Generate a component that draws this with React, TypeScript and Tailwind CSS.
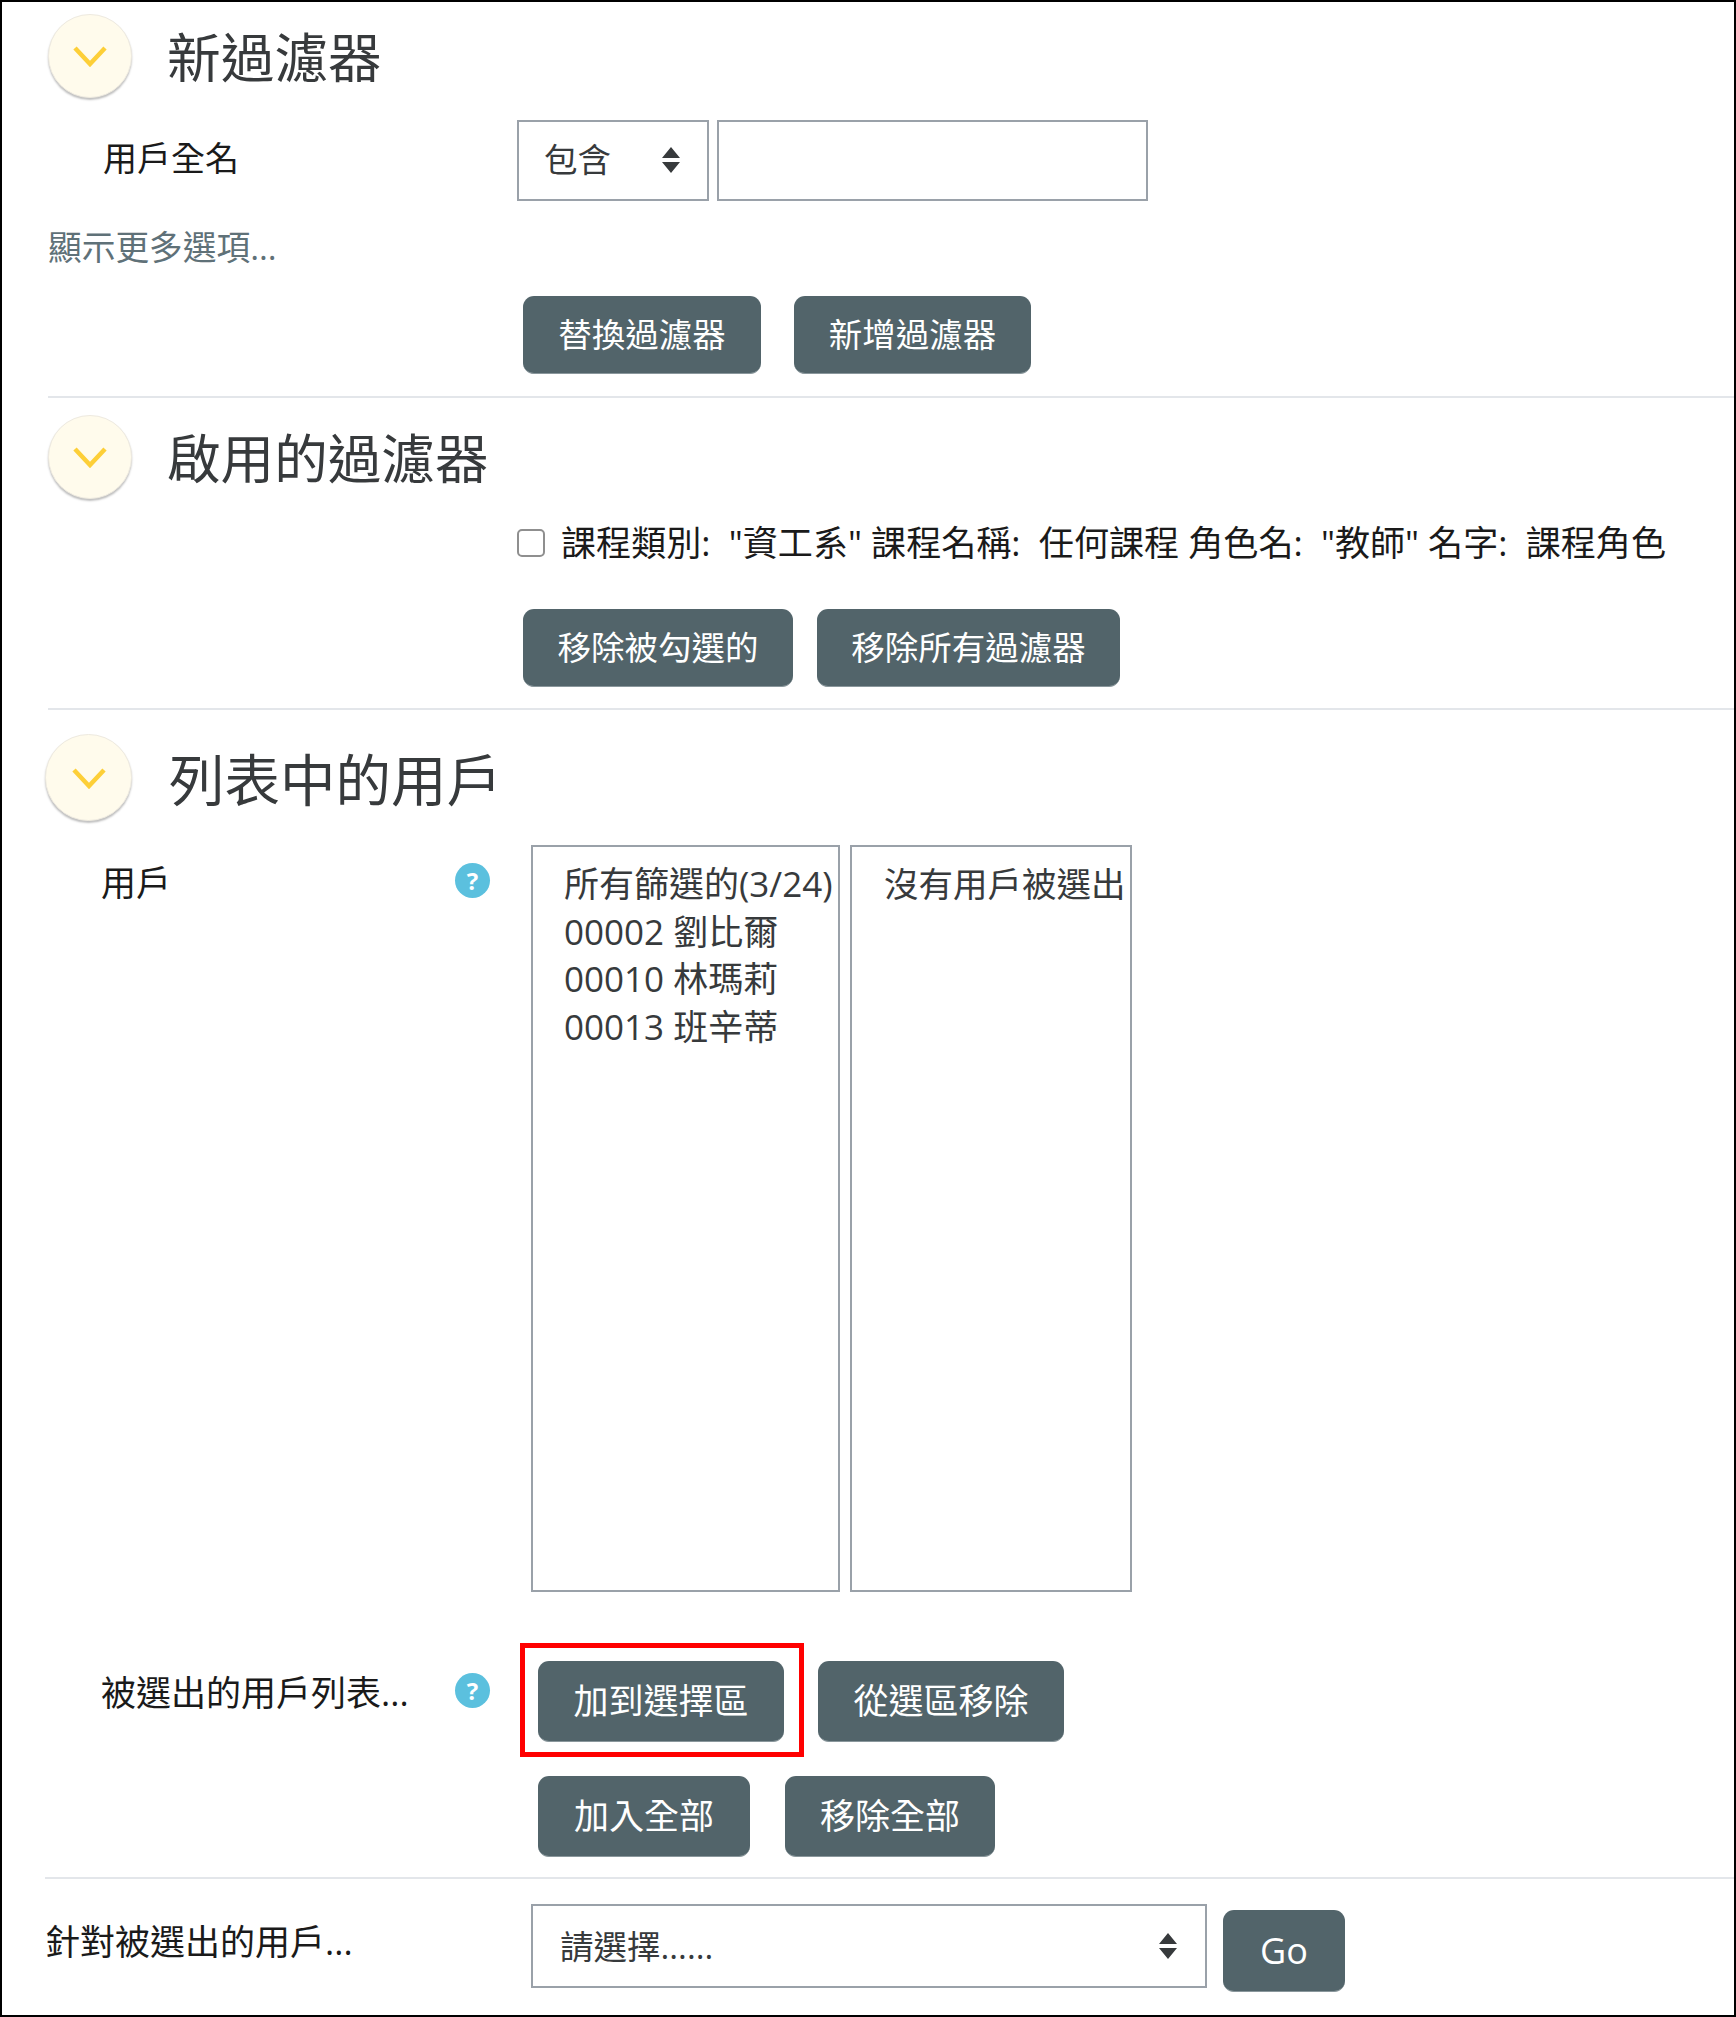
import React from "react";

const font = { fontFamily: '"Open Sans", "Noto Sans CJK TC", sans-serif' };

function Btn({ children, className = "" }: { children: React.ReactNode; className?: string }) {
  return (
    <div className={"flex items-center justify-center rounded-[11px] bg-[#52646a] border-b border-[#8a979c] text-white " + className}>
      {children}
    </div>
  );
}

function Circle({ size = "w-[84px] h-[84px]" }: { size?: string }) {
  return (
    <div className={"flex shrink-0 items-center justify-center rounded-full bg-[#fffbec] border border-[#eeeae0] shadow-[0_2px_2px_rgba(0,0,0,0.25)] " + size}>
      <svg width="36" height="24" viewBox="0 0 36 24" fill="none">
        <path d="M3 4 L18 20 L33 4" stroke="#fdcf38" strokeWidth="4.5" />
      </svg>
    </div>
  );
}

function Help() {
  return (
    <div className="mt-[3px] flex h-[35px] w-[35px] items-center justify-center rounded-full bg-[#5bc0de] text-[24px] font-bold leading-none text-white">
      ?
    </div>
  );
}

function Spinner() {
  return (
    <svg width="20" height="28" viewBox="0 0 20 28" className="shrink-0">
      <path d="M10 1 L19 12 L1 12 Z M1 16 L19 16 L10 27 Z" fill="#373a3c" />
    </svg>
  );
}

export default function App() {
  return (
    <div style={font} className="h-[2017px] w-[1736px] overflow-hidden border-2 border-black bg-white text-[#373a3c]">
      <div className="pl-[46px] pt-[12px]">
        <div className="flex h-[84px] items-center">
          <Circle />
          <h2 className="ml-[35px] pt-[3px] text-[53.7px] leading-none">新過濾器</h2>
        </div>
        <div className="mt-[22px] flex items-start">
          <div className="w-[469px] pl-[55px] pt-[15px] text-[34px] leading-[46px] text-[#1a1a1a]">用戶全名</div>
          <div className="flex h-[81px] w-[192px] items-center justify-between border-2 border-[#9aa1a9] pb-[2px] pl-[25px] pr-[26px] text-[33.5px]">
            <span>包含</span>
            <Spinner />
          </div>
          <div className="ml-[8px] h-[81px] w-[431px] border-2 border-[#9aa1a9]" />
        </div>
        <div className="mt-[26px] h-[40px] text-[33.7px] leading-[40px] text-[#5f7178]">顯示更多選項...</div>
        <div className="ml-[475px] mt-[29px] flex gap-[33px] text-[33.5px]">
          <Btn className="h-[78px] w-[238px]">替換過濾器</Btn>
          <Btn className="h-[78px] w-[237px]">新增過濾器</Btn>
        </div>
        <div className="mt-[22px] border-t-2 border-[#e3e6ea]" />

        <div className="mt-[17px] flex h-[84px] items-center">
          <Circle />
          <h2 className="ml-[35px] pt-[3px] text-[53.6px] leading-none">啟用的過濾器</h2>
        </div>
        <div className="ml-[469px] mt-[24px] flex h-[40px] items-center text-[#1a1a1a]">
          <div className="h-[28px] w-[28px] rounded-[5px] border-2 border-[#8f8f8f]" />
          <span className="ml-[16px] whitespace-nowrap text-[35.1px] leading-none">
            課程類別:&nbsp;&nbsp;"資工系" 課程名稱:&nbsp;&nbsp;任何課程 角色名:&nbsp;&nbsp;"教師" 名字:&nbsp;&nbsp;課程角色
          </span>
        </div>
        <div className="ml-[475px] mt-[46px] flex gap-[24px] text-[33.5px]">
          <Btn className="h-[78px] w-[270px]">移除被勾選的</Btn>
          <Btn className="h-[78px] w-[303px]">移除所有過濾器</Btn>
        </div>
        <div className="mt-[21px] border-t-2 border-[#e3e6ea]" />
      </div>

      <div className="pl-[43px]">
        <div className="mt-[24px] flex h-[87px] items-center">
          <Circle size="w-[87px] h-[87px]" />
          <h2 className="ml-[37px] pt-[4px] text-[55.5px] leading-none">列表中的用戶</h2>
        </div>

        <div className="mt-[24px] flex items-start">
          <div className="flex w-[486px] items-start pl-[56px] pt-[15px]">
            <div className="w-[354px] text-[35px] leading-[46px] text-[#1a1a1a]">用戶</div>
            <Help />
          </div>
          <div className="h-[747px] w-[309px] whitespace-nowrap border-2 border-[#9aa1a9] pl-[31px] pt-[13px] text-[35px] leading-[47.5px]">
            <div>所有篩選的(3/24)</div>
            <div>00002 劉比爾</div>
            <div>00010 林瑪莉</div>
            <div>00013 班辛蒂</div>
          </div>
          <div className="ml-[10px] h-[747px] w-[282px] whitespace-nowrap border-2 border-[#9aa1a9] pl-[32px] pt-[13px] text-[34.5px] leading-[47.5px]">
            沒有用戶被選出
          </div>
        </div>

        <div className="mt-[51px] flex items-start">
          <div className="flex w-[475px] items-start pl-[56px] pt-[27px]">
            <div className="w-[354px] whitespace-nowrap text-[35px] leading-[46px] text-[#1a1a1a]">被選出的用戶列表...</div>
            <Help />
          </div>
          <div className="flex flex-col text-[35px]">
            <div className="flex items-start">
              <div className="border-[5px] border-[#ff0000] pb-[10px] pl-[13px] pr-[15px] pt-[13px]">
                <Btn className="h-[81px] w-[246px]">加到選擇區</Btn>
              </div>
              <Btn className="ml-[14px] mt-[18px] h-[81px] w-[246px]">從選區移除</Btn>
            </div>
            <div className="ml-[18px] mt-[19px] flex gap-[35px]">
              <Btn className="h-[81px] w-[212px]">加入全部</Btn>
              <Btn className="h-[81px] w-[210px]">移除全部</Btn>
            </div>
          </div>
        </div>
        <div className="mt-[20px] border-t-2 border-[#e3e6ea]" />

        <div className="mt-[25px] flex items-start">
          <div className="w-[486px] whitespace-nowrap pt-[15px] text-[35px] leading-[46px] text-[#1a1a1a]">針對被選出的用戶...</div>
          <div className="flex h-[84px] w-[676px] items-center justify-between border-2 border-[#9aa1a9] pl-[27px] pr-[27px] text-[33.5px]">
            <span>請選擇......</span>
            <Spinner />
          </div>
          <Btn className="ml-[16px] mt-[6px] h-[82px] w-[122px] text-[36px]">Go</Btn>
        </div>
      </div>
    </div>
  );
}
